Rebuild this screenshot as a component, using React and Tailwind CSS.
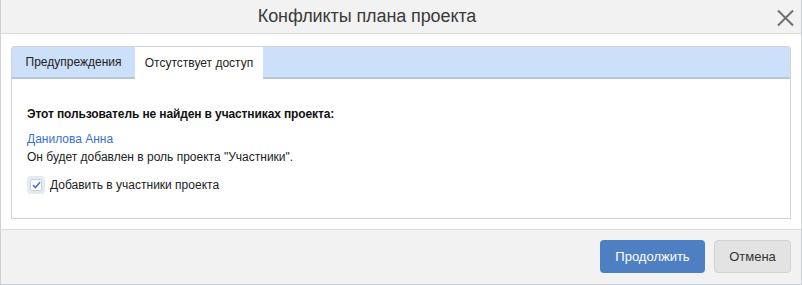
import React from "react";

export default function App() {
  return (
    <div className="w-[802px] h-[285px] flex flex-col bg-white border-x border-b border-[#cdd1d9] font-['Liberation_Sans',Arial,sans-serif] text-[#222]">
      <div className="relative h-[34px] shrink-0 bg-[#f2f2f2] border-b border-[#dcdcdc] flex items-center justify-center pr-[68px]">
        <span className="text-[18px] text-[#3a3a3a] tracking-[-0.1px]">Конфликты плана проекта</span>
        <svg className="absolute left-[775px] top-[9px]" width="19" height="18" viewBox="0 0 19 18">
          <path d="M2 1.5 L17 16.5 M17 1.5 L2 16.5" stroke="#6f6f6f" strokeWidth="2" fill="none" />
        </svg>
      </div>
      <div className="shrink-0 px-[10px] pt-[12px] pb-[10px]">
        <div className="h-[173px] border border-[#cfd3da] rounded-t-[3px] flex flex-col">
          <div className="h-[32px] shrink-0 bg-[#cce0f9] border-b-2 border-[#b3c6de] flex items-end rounded-t-[2px]">
            <div className="h-[30px] w-[123px] flex items-center justify-center text-[12px] text-[#222]">Предупреждения</div>
            <div className="h-[32px] w-[128px] -mb-[2px] bg-white flex items-center justify-center text-[12px] text-[#222]">Отсутствует доступ</div>
          </div>
          <div className="px-[15px] pt-[26px] text-[12px] leading-[18px]">
            <div className="font-bold text-[#111] tracking-[-0.12px]">Этот пользователь не найден в участниках проекта:</div>
            <div className="mt-[7px] text-[#3d6fcf]">Данилова Анна</div>
            <div className="text-[#222]">Он будет добавлен в роль проекта "Участники".</div>
            <div className="mt-[10px] flex items-center gap-[5px]">
              <div className="w-[18px] h-[18px] rounded-[4px] bg-[#e4eaf2] flex items-center justify-center">
                <div className="w-[12px] h-[12px] rounded-[2px] bg-white border border-[#c9d1dc] flex items-center justify-center">
                  <svg width="9" height="8" viewBox="0 0 9 8">
                    <path d="M1 4.2 L3.4 6.5 L8 1.2" stroke="#4a77c0" strokeWidth="1.7" fill="none" />
                  </svg>
                </div>
              </div>
              <span className="text-[#222]">Добавить в участники проекта</span>
            </div>
          </div>
        </div>
      </div>
      <div className="flex-1 bg-[#f2f2f2] border-t border-[#dcdcdc] flex items-start justify-end gap-[9px] pt-[10px] pr-[10px]">
        <button className="w-[105px] h-[33px] rounded-[4px] bg-[#4e7fc3] text-white text-[13px]">Продолжить</button>
        <button className="w-[77px] h-[33px] rounded-[4px] bg-[#e3e3e3] border border-[#d2d2d2] text-[#333] text-[13px]">Отмена</button>
      </div>
    </div>
  );
}
